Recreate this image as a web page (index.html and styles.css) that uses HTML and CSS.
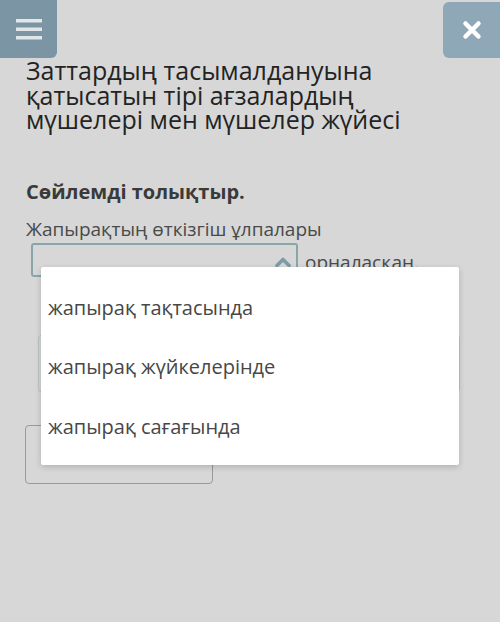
FILE: index.html
```html
<!DOCTYPE html>
<html lang="kk">
<head>
    <meta charset="UTF-8">
    <meta name="viewport" content="width=device-width, initial-scale=1.0">
    <title>Сөйлемді толықтыр</title>
    <link rel="stylesheet" href="styles.css">
</head>
<body>

    <header class="top-bar">
        <button class="icon-btn menu-btn" aria-label="Мәзір">
            <svg width="26" height="24" viewBox="0 0 26 24">
                <rect x="0" y="2" width="26" height="3.5" fill="#e1e6e8"/>
                <rect x="0" y="10.5" width="26" height="3.5" fill="#e1e6e8"/>
                <rect x="0" y="19" width="26" height="3.5" fill="#e1e6e8"/>
            </svg>
        </button>
        <button class="icon-btn close-btn" aria-label="Жабу">
            <svg width="20" height="20" viewBox="0 0 20 20">
                <path d="M3.5 3.5 L16.5 16.5 M16.5 3.5 L3.5 16.5" stroke="#ffffff" stroke-width="4.5" stroke-linecap="round"/>
            </svg>
        </button>
    </header>

    <main class="content">
        <h1 class="title">Заттардың тасымалдануына қатысатын тірі ағзалардың мүшелері мен мүшелер жүйесі</h1>

        <p class="task">Сөйлемді толықтыр.</p>

        <div class="sentence">
            <p class="sentence-start">Жапырақтың өткізгіш ұлпалары</p>
            <div class="fill-row">
                <div class="select-box">
                    <svg class="chevron" width="18" height="12" viewBox="0 0 18 12">
                        <path d="M3 9.5 L9 3.5 L15 9.5" stroke="#7d9ca3" stroke-width="3.6" fill="none" stroke-linecap="round" stroke-linejoin="round"/>
                    </svg>
                </div>
                <span class="sentence-end">орналасқан.</span>
            </div>

            <!-- Options list opened over the page -->
            <ul class="dropdown">
                <li>жапырақ тақтасында</li>
                <li>жапырақ жүйкелерінде</li>
                <li>жапырақ сағағында</li>
            </ul>
        </div>

        <div class="answer-area"></div>

        <div class="check-btn"></div>
    </main>

</body>
</html>
```

FILE: styles.css
```css
* {
    margin: 0;
    padding: 0;
    box-sizing: border-box;
    font-family: "Open Sans", "Noto Sans", sans-serif;
}

body {
    background-color: #d6d7d6;
    color: #2b2b2b;
    width: 500px;
    height: 622px;
    overflow: hidden;
}

/* Top bar */
.top-bar {
    display: flex;
    justify-content: space-between;
    align-items: flex-start;
    height: 58px;
}

.icon-btn {
    border: none;
    display: flex;
    align-items: center;
    justify-content: center;
    cursor: pointer;
}

.menu-btn {
    width: 57px;
    height: 58px;
    background-color: #7b95a4;
    border-radius: 0 0 6px 0;
}

.close-btn {
    width: 57px;
    height: 56px;
    margin-top: 2px;
    background-color: #8fa8b8;
    border-radius: 6px 0 0 6px;
}

.content {
    padding: 0 26px;
}

.title {
    width: 400px;
    font-size: 25px;
    font-weight: normal;
    line-height: 24.5px;
    color: #232323;
}

.task {
    font-size: 20px;
    font-weight: bold;
    line-height: 24px;
    color: #3a3a3a;
    margin-top: 48px;
}

.sentence {
    position: relative;
    margin-top: 14px;
}

.sentence-start {
    font-size: 19px;
    color: #4a4a4a;
    line-height: 22px;
}

.fill-row {
    display: flex;
    align-items: flex-end;
    gap: 7px;
    margin: 3px 0 0 5px;
}

.select-box {
    width: 267px;
    height: 34px;
    border: 2px solid #8aa5aa;
    border-radius: 3px;
    display: flex;
    align-items: flex-end;
    justify-content: flex-end;
    padding: 0 4px 7px 0;
}

.sentence-end {
    font-size: 19px;
    color: #4a4a4a;
    line-height: 22px;
    margin-bottom: 4px;
}

/* Opened options list */
.dropdown {
    position: absolute;
    top: 49.5px;
    left: 15px;
    width: 418px;
    height: 198px;
    list-style: none;
    background: #fff;
    border-radius: 2px;
    box-shadow: 0 2px 6px rgba(0, 0, 0, 0.18);
    padding-top: 10.5px;
}

.dropdown li {
    font-size: 20px;
    color: #474747;
    height: 59.5px;
    line-height: 59.5px;
    padding-left: 7px;
}

.answer-area {
    width: 422px;
    height: 57px;
    margin: 58px 0 0 12px;
    border: 1px solid #bcc4c4;
    border-radius: 3px;
}

.check-btn {
    width: 188px;
    height: 59px;
    margin-top: 33px;
    margin-left: -1px;
    border: 1px solid #999;
    border-radius: 4px;
}
```
